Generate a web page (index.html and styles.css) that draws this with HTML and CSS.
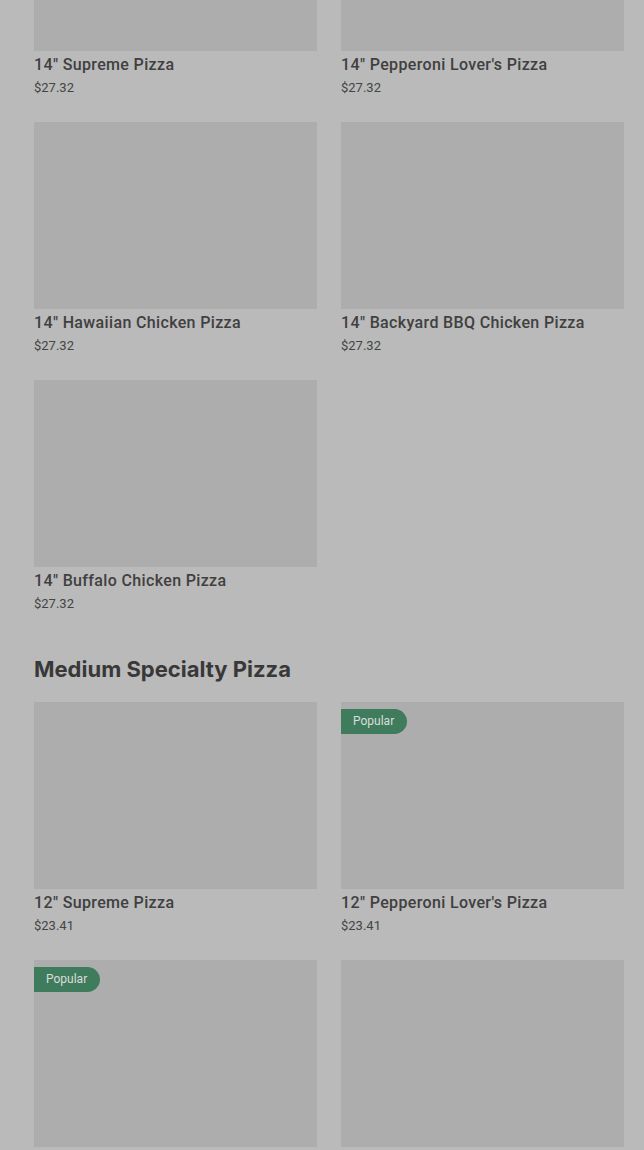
FILE: index.html
```html
<!DOCTYPE html>
<html lang="en">
<head>
  <meta charset="UTF-8">
  <meta name="viewport" content="width=device-width, initial-scale=1.0">
  <title>Menu</title>
  <link rel="stylesheet" href="styles.css">
</head>
<body>
  <main class="menu">
    <section class="category category-large">
      <div class="item-grid">
        <div class="item">
          <div class="item-image"></div>
          <div class="item-name">14" Supreme Pizza</div>
          <div class="item-price">$27.32</div>
        </div>
        <div class="item">
          <div class="item-image"></div>
          <div class="item-name">14" Pepperoni Lover's Pizza</div>
          <div class="item-price">$27.32</div>
        </div>
        <div class="item">
          <div class="item-image"></div>
          <div class="item-name">14" Hawaiian Chicken Pizza</div>
          <div class="item-price">$27.32</div>
        </div>
        <div class="item">
          <div class="item-image"></div>
          <div class="item-name">14" Backyard BBQ Chicken Pizza</div>
          <div class="item-price">$27.32</div>
        </div>
        <div class="item">
          <div class="item-image"></div>
          <div class="item-name">14" Buffalo Chicken Pizza</div>
          <div class="item-price">$27.32</div>
        </div>
      </div>
    </section>

    <section class="category">
      <h2 class="category-title">Medium Specialty Pizza</h2>
      <div class="item-grid">
        <div class="item">
          <div class="item-image"></div>
          <div class="item-name">12" Supreme Pizza</div>
          <div class="item-price">$23.41</div>
        </div>
        <div class="item">
          <div class="item-image">
            <span class="badge">Popular</span>
          </div>
          <div class="item-name">12" Pepperoni Lover's Pizza</div>
          <div class="item-price">$23.41</div>
        </div>
        <div class="item">
          <div class="item-image">
            <span class="badge">Popular</span>
          </div>
          <div class="item-name">12" Hawaiian Chicken Pizza</div>
          <div class="item-price">$23.41</div>
        </div>
        <div class="item">
          <div class="item-image"></div>
          <div class="item-name">12" Backyard BBQ Chicken Pizza</div>
          <div class="item-price">$23.41</div>
        </div>
      </div>
    </section>
  </main>
</body>
</html>
```

FILE: styles.css
```css
body {
  background-color: #bababa;
  color: #3a3a3a;
  font-family: Roboto, "Liberation Sans", Arial, sans-serif;
  margin: 0;
  padding: 0;
  overflow: hidden;
}
.menu {
  padding: 0 20px 0 34px;
}
.category-large {
  margin-top: -136px;
}
.category-title {
  font-family: Inter, "Liberation Sans", Arial, sans-serif;
  font-size: 22px;
  line-height: 28px;
  font-weight: 700;
  letter-spacing: 0;
  margin: 42px 0 19px;
  color: #383838;
}
.item-grid {
  display: grid;
  grid-template-columns: 1fr 1fr;
  gap: 25px 24px;
}
.item-image {
  position: relative;
  height: 187px;
  background-color: #adadad;
}
.item-name {
  margin-top: 4px;
  font-size: 16px;
  line-height: 20px;
  font-weight: 500;
  letter-spacing: 0.35px;
  color: #404040;
}
.item-price {
  margin-top: 4px;
  font-size: 13px;
  line-height: 18px;
  color: #444;
}
.badge {
  position: absolute;
  top: 7px;
  left: 0;
  height: 25px;
  line-height: 25px;
  padding: 0 13px 0 12px;
  font-size: 12px;
  color: #dcdcdc;
  background-color: #3f7c5d;
  border-radius: 0 13px 13px 0;
}
```
